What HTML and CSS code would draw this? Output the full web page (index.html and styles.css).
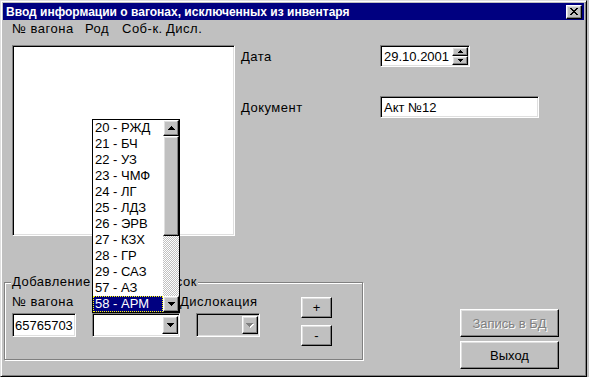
FILE: index.html
```html
<!DOCTYPE html>
<html lang="ru">
<head>
    <meta charset="UTF-8">
    <title>Ввод информации о вагонах</title>
    <link rel="stylesheet" href="styles.css">
</head>
<body>
    <div class="window">
        <div class="titlebar">
            <span class="title">Ввод информации о вагонах, исключенных из инвентаря</span>
            <div class="close-btn raised">
                <svg width="8" height="7" viewBox="0 0 8 7"><path d="M0 0h2v1H0zM6 0h2v1H6zM1 1h2v1H1zM5 1h2v1H5zM2 2h4v1H2zM3 3h2v1H3zM2 4h4v1H2zM1 5h2v1H1zM5 5h2v1H5zM0 6h2v1H0zM6 6h2v1H6z"/></svg>
            </div>
        </div>

        <div class="columns">
            <span class="col-num">№ вагона</span>
            <span class="col-rod">Род</span>
            <span class="col-own">Соб-к.</span>
            <span>Дисл.</span>
        </div>

        <div class="top-row">
            <div class="listbox sunken"></div>
            <div class="fields">
                <div class="field">
                    <span class="field-label">Дата</span>
                    <div class="edit sunken date-edit">
                        <span>29.10.2001</span>
                        <div class="spinner">
                            <div class="spin-btn raised"><svg width="5" height="3" viewBox="0 0 5 3"><path d="M2 0h1v1h1v1h1v1H0V2h1V1h1z"/></svg></div>
                            <div class="spin-btn raised"><svg width="5" height="3" viewBox="0 0 5 3"><path d="M0 0h5v1H4v1H3v1H2V2H1V1H0z"/></svg></div>
                        </div>
                    </div>
                </div>
                <div class="field doc-field">
                    <span class="field-label">Документ</span>
                    <div class="edit sunken doc-edit">Акт №12</div>
                </div>
            </div>
        </div>

        <div class="bottom-row">
            <div class="group">
                <span class="legend">Добавление вагона в список</span>
                <div class="col-wagon">
                    <span class="group-label">№ вагона</span>
                    <div class="edit sunken wagon-edit">65765703</div>
                </div>
                <div class="col-owner">
                    <span class="group-label"></span>
                    <div class="combo-wrap">
                        <div class="combo sunken">
                            <div class="combo-btn raised"><svg width="7" height="4" viewBox="0 0 7 4"><path d="M0 0h7v1H6v1H5v1H4v1H3V3H2V2H1V1H0z"/></svg></div>
                        </div>
                        <div class="dropdown">
                            <div class="dropdown-items">
                                <div class="dropdown-item">20 - РЖД</div>
                                <div class="dropdown-item">21 - БЧ</div>
                                <div class="dropdown-item">22 - УЗ</div>
                                <div class="dropdown-item">23 - ЧМФ</div>
                                <div class="dropdown-item">24 - ЛГ</div>
                                <div class="dropdown-item">25 - ЛДЗ</div>
                                <div class="dropdown-item">26 - ЭРВ</div>
                                <div class="dropdown-item">27 - КЗХ</div>
                                <div class="dropdown-item">28 - ГР</div>
                                <div class="dropdown-item">29 - САЗ</div>
                                <div class="dropdown-item">57 - АЗ</div>
                                <div class="dropdown-item selected">58 - АРМ</div>
                            </div>
                            <div class="scrollbar">
                                <div class="scroll-btn raised"><svg width="7" height="4" viewBox="0 0 7 4"><path d="M3 0h1v1h1v1h1v1h1v1H0V3h1V2h1V1h1z"/></svg></div>
                                <div class="scroll-thumb raised"></div>
                                <div class="scroll-track"></div>
                                <div class="scroll-btn raised"><svg width="7" height="4" viewBox="0 0 7 4"><path d="M0 0h7v1H6v1H5v1H4v1H3V3H2V2H1V1H0z"/></svg></div>
                            </div>
                        </div>
                    </div>
                </div>
                <div class="col-disl">
                    <span class="group-label">Дислокация</span>
                    <div class="combo sunken disl-combo">
                        <div class="combo-btn raised"><svg width="8" height="5" viewBox="0 0 8 5"><path fill="#fff" d="M1 1h7v1H7v1H6v1H5v1H4V4H3V3H2V2H1z"/><path fill="#808080" d="M0 0h7v1H6v1H5v1H4v1H3V3H2V2H1V1H0z"/></svg></div>
                    </div>
                </div>
                <div class="col-buttons">
                    <button class="btn small-btn">+</button>
                    <button class="btn small-btn">-</button>
                </div>
            </div>
            <div class="actions">
                <button class="btn action-btn" disabled>Запись в БД</button>
                <button class="btn action-btn">Выход</button>
            </div>
        </div>
    </div>
</body>
</html>
```

FILE: styles.css
```css
* {
    box-sizing: border-box;
}
body {
    margin: 0;
    background-color: #c0c0c0;
    color: #000;
    font-family: 'Liberation Sans', Arial, sans-serif;
    font-size: 13px;
}
.window {
    width: 587px;
    height: 377px;
    padding: 2px;
    background-color: #c0c0c0;
    border: 1px solid;
    border-color: #dfdfdf #000 #000 #dfdfdf;
    box-shadow: inset 1px 1px #fff, inset -1px -1px #808080;
}
/* bevels */
.raised {
    background-color: #c0c0c0;
    border: 1px solid;
    border-color: #fff #000 #000 #fff;
    box-shadow: inset -1px -1px #808080, inset 1px 1px #dfdfdf;
}
.sunken {
    border: 1px solid;
    border-color: #808080 #fff #fff #808080;
    box-shadow: inset 1px 1px #000, inset -1px -1px #dfdfdf;
}
.titlebar {
    height: 17px;
    background-color: #000080;
    color: #fff;
    display: flex;
    align-items: center;
    justify-content: space-between;
    padding: 0 2px 0 3px;
}
.title {
    font-weight: bold;
    font-size: 12px;
    white-space: nowrap;
}
.close-btn {
    width: 16px;
    height: 14px;
    display: flex;
    align-items: center;
    justify-content: center;
}
.close-btn svg {
    display: block;
}
.columns {
    display: flex;
    margin-top: 2px;
    padding-left: 9px;
    height: 14px;
    line-height: 14px;
    letter-spacing: 0.5px;
}
.col-num {
    width: 73px;
}
.col-rod {
    width: 37px;
}
.col-own {
    width: 44px;
}
.top-row {
    display: flex;
    margin-top: 9px;
}
.listbox {
    margin-left: 9px;
    width: 223px;
    height: 191px;
    background-color: #fff;
}
.fields {
    margin-left: 6px;
}
.field {
    display: flex;
    align-items: center;
}
.field-label {
    width: 139px;
    letter-spacing: 0.5px;
}
.doc-field {
    margin-top: 29px;
}
.edit {
    background-color: #fff;
    display: flex;
    align-items: center;
    padding: 1px 1px 1px 3px;
    white-space: nowrap;
}
.date-edit {
    width: 90px;
    height: 22px;
    justify-content: space-between;
}
.doc-edit {
    width: 159px;
    height: 22px;
}
.spinner {
    display: flex;
    flex-direction: column;
    width: 16px;
    height: 18px;
}
.spin-btn {
    height: 9px;
    display: flex;
    align-items: center;
    justify-content: center;
}
.spin-btn svg,
.scroll-btn svg,
.combo-btn svg {
    display: block;
}
.bottom-row {
    display: flex;
    margin-top: 46px;
}
.group {
    position: relative;
    margin-left: 1px;
    width: 359px;
    height: 78px;
    display: flex;
    padding: 12px 0 0 7px;
    border: 1px solid #808080;
    box-shadow: inset 1px 1px #fff, 1px 1px #fff;
}
.legend {
    position: absolute;
    top: -8px;
    left: 6px;
    padding: 0 1px;
    line-height: 14px;
    letter-spacing: 0.5px;
    white-space: nowrap;
    background-color: #c0c0c0;
}
.group-label {
    display: block;
    height: 14px;
    line-height: 14px;
    margin-bottom: 4px;
    letter-spacing: 0.5px;
    white-space: nowrap;
}
.col-wagon {
    width: 64px;
}
.wagon-edit {
    height: 24px;
    padding-left: 2px;
}
.col-owner {
    margin-left: 16px;
    width: 88px;
}
.combo-wrap {
    position: relative;
}
.combo {
    height: 24px;
    background-color: #fff;
    display: flex;
    justify-content: flex-end;
    padding: 2px 1px 2px 2px;
}
.combo-btn {
    width: 16px;
    height: 100%;
    display: flex;
    align-items: center;
    justify-content: center;
}
.col-disl {
    width: 80px;
}
.disl-combo {
    margin-left: 16px;
    width: 64px;
    background-color: #c0c0c0;
}
.col-buttons {
    margin-left: 41px;
    padding-top: 2px;
    display: flex;
    flex-direction: column;
    gap: 7px;
}
.btn {
    font-family: inherit;
    font-size: 13px;
    color: #000;
    background-color: #c0c0c0;
    border: 1px solid;
    border-color: #fff #000 #000 #fff;
    box-shadow: inset -1px -1px #808080, inset 1px 1px #dfdfdf;
    padding: 0;
    margin: 0;
}
.btn:disabled {
    color: #808080;
    text-shadow: 1px 1px #fff;
}
.small-btn {
    width: 31px;
    height: 21px;
}
.actions {
    margin-left: 97px;
    margin-top: 27px;
    display: flex;
    flex-direction: column;
    gap: 4px;
}
.action-btn {
    width: 99px;
    height: 28px;
}
/* open drop-down list of the owner combo */
.dropdown {
    position: absolute;
    left: 0;
    bottom: 100%;
    z-index: 5;
    width: 88px;
    height: 194px;
    border: 1px solid #000;
    background-color: #fff;
    display: flex;
}
.dropdown-items {
    flex: 1;
}
.dropdown-item {
    height: 16px;
    line-height: 16px;
    padding-left: 2px;
    white-space: nowrap;
}
.dropdown-item.selected {
    background-color: #000080;
    color: #fff;
    outline: 1px dotted #ffff00;
    outline-offset: -1px;
}
.scrollbar {
    width: 16px;
    display: flex;
    flex-direction: column;
}
.scroll-btn {
    height: 16px;
    display: flex;
    align-items: center;
    justify-content: center;
}
.scroll-thumb {
    height: 100px;
}
.scroll-track {
    flex: 1;
    background: repeating-conic-gradient(#fff 0 25%, #c0c0c0 0 50%) 0 0 / 2px 2px;
}
```
